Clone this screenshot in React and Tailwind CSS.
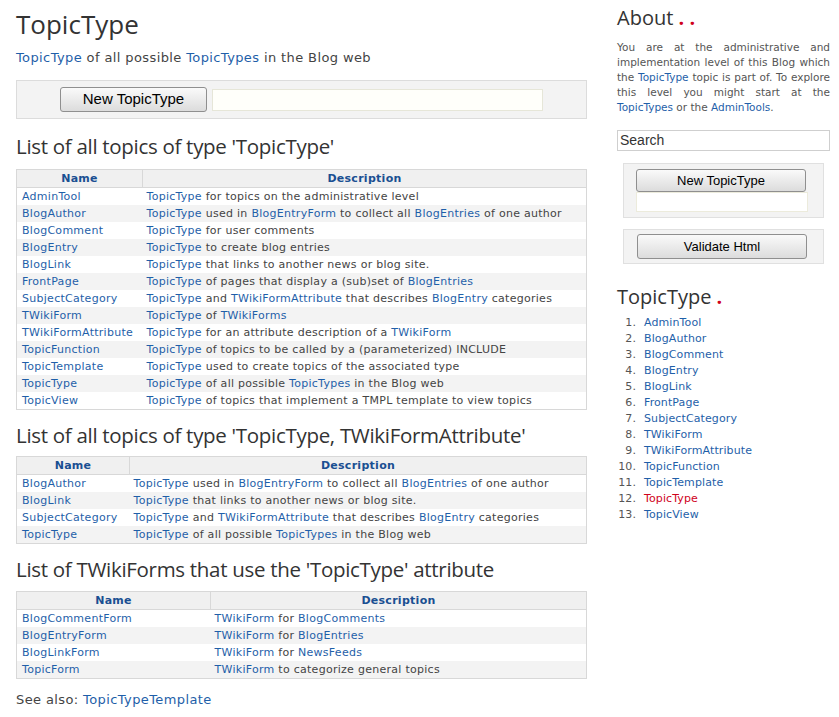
import React from "react";

const L = ({ children }) => <a className="text-[#1f5fa9] no-underline">{children}</a>;

const table1 = [
  ["AdminTool", <><L>TopicType</L> for topics on the administrative level</>],
  ["BlogAuthor", <><L>TopicType</L> used in <L>BlogEntryForm</L> to collect all <L>BlogEntries</L> of one author</>],
  ["BlogComment", <><L>TopicType</L> for user comments</>],
  ["BlogEntry", <><L>TopicType</L> to create blog entries</>],
  ["BlogLink", <><L>TopicType</L> that links to another news or blog site.</>],
  ["FrontPage", <><L>TopicType</L> of pages that display a (sub)set of <L>BlogEntries</L></>],
  ["SubjectCategory", <><L>TopicType</L> and <L>TWikiFormAttribute</L> that describes <L>BlogEntry</L> categories</>],
  ["TWikiForm", <><L>TopicType</L> of <L>TWikiForms</L></>],
  ["TWikiFormAttribute", <><L>TopicType</L> for an attribute description of a <L>TWikiForm</L></>],
  ["TopicFunction", <><L>TopicType</L> of topics to be called by a (parameterized) INCLUDE</>],
  ["TopicTemplate", <><L>TopicType</L> used to create topics of the associated type</>],
  ["TopicType", <><L>TopicType</L> of all possible <L>TopicTypes</L> in the Blog web</>],
  ["TopicView", <><L>TopicType</L> of topics that implement a TMPL template to view topics</>],
];

const table2 = [
  ["BlogAuthor", <><L>TopicType</L> used in <L>BlogEntryForm</L> to collect all <L>BlogEntries</L> of one author</>],
  ["BlogLink", <><L>TopicType</L> that links to another news or blog site.</>],
  ["SubjectCategory", <><L>TopicType</L> and <L>TWikiFormAttribute</L> that describes <L>BlogEntry</L> categories</>],
  ["TopicType", <><L>TopicType</L> of all possible <L>TopicTypes</L> in the Blog web</>],
];

const table3 = [
  ["BlogCommentForm", <><L>TWikiForm</L> for <L>BlogComments</L></>],
  ["BlogEntryForm", <><L>TWikiForm</L> for <L>BlogEntries</L></>],
  ["BlogLinkForm", <><L>TWikiForm</L> for <L>NewsFeeds</L></>],
  ["TopicForm", <><L>TWikiForm</L> to categorize general topics</>],
];

const sideList = [
  "AdminTool", "BlogAuthor", "BlogComment", "BlogEntry", "BlogLink", "FrontPage",
  "SubjectCategory", "TWikiForm", "TWikiFormAttribute", "TopicFunction", "TopicTemplate",
  "TopicType", "TopicView",
];

const TopicTable = ({ rows, nameW }) => (
  <table className="w-full border-collapse border border-[#d8d8d8] text-[11px] leading-[17px] tracking-[0.025em]">
    <thead>
      <tr className="bg-[#f0f0f0]">
        <th className="border-r border-b border-[#d8d8d8] text-[#1a4f92] font-bold h-[17px] p-0" style={{ width: nameW }}>Name</th>
        <th className="border-b border-[#d8d8d8] text-[#1a4f92] font-bold p-0">Description</th>
      </tr>
    </thead>
    <tbody>
      {rows.map(([n, d], i) => (
        <tr key={n} className={i % 2 ? "bg-[#f3f3f3]" : "bg-white"}>
          <td className="px-[5px] py-0 h-[17px] whitespace-nowrap"><L>{n}</L></td>
          <td className="px-[4px] py-0 whitespace-nowrap text-[#444]">{d}</td>
        </tr>
      ))}
    </tbody>
  </table>
);

const Btn = ({ children, className }) => (
  <button className={`rounded-[3px] border border-[#8f8f8f] bg-gradient-to-b from-[#fafafa] to-[#dcdcdc] font-['Liberation_Sans',Arial,sans-serif] text-black ${className}`}>
    {children}
  </button>
);

const H2 = ({ children, className }) => (
  <h2 className={`font-['Open_Sans',sans-serif] text-[20.5px] leading-[26px] text-[#333] tracking-[-0.3px] ${className}`}>{children}</h2>
);

export default function App() {
  return (
    <div className="w-[839px] h-[717px] bg-white font-['DejaVu_Sans',Verdana,sans-serif] text-[#444] flex overflow-hidden">
      <main className="w-[571px] ml-[16px] flex flex-col">
        <h1 className="font-['Open_Sans',sans-serif] text-[26px] leading-[30px] text-[#333] mt-[9px]">TopicType</h1>
        <p className="text-[13px] mt-[10px] leading-[18px] tracking-[0.03em]"><L>TopicType</L> of all possible <L>TopicTypes</L> in the Blog web</p>
        <div className="mt-[13px] h-[39px] bg-[#f3f3f3] border border-[#dcdcdc] flex items-center pl-[43px] gap-[5px]">
          <Btn className="w-[147px] h-[25px] text-[15px]">New TopicType</Btn>
          <input className="w-[331px] h-[22px] bg-[#fffffa] border border-[#e6e6d8] outline-none" />
        </div>
        <H2 className="mt-[14px] mb-[10px]">List of all topics of type 'TopicType'</H2>
        <TopicTable rows={table1} nameW={126} />
        <H2 className="mt-[12px] mb-[8px]">List of all topics of type 'TopicType, TWikiFormAttribute'</H2>
        <TopicTable rows={table2} nameW={113} />
        <H2 className="mt-[12px] mb-[9px]">List of TWikiForms that use the 'TopicType' attribute</H2>
        <TopicTable rows={table3} nameW={194} />
        <p className="text-[13px] mt-[12px] leading-[18px] tracking-[0.03em]">See also: <L>TopicTypeTemplate</L></p>
      </main>
      <aside className="w-[213px] ml-[30px] flex flex-col">
        <h2 className="font-['Open_Sans',sans-serif] text-[20px] leading-[24px] text-[#333] mt-[6px]">About <span className="text-[#d0021b] font-bold">. .</span></h2>
        <p className="text-[10.5px] leading-[15px] text-[#555] text-justify mt-[10px]">
          You are at the administrative and implementation level of this Blog which the <L>TopicType</L> topic is part of. To explore this level you might start at the <L>TopicTypes</L> or the <L>AdminTools</L>.
        </p>
        <input className="mt-[15px] h-[21px] w-[213px] border border-[#cfcfcf] px-[2px] text-[14px] font-['Liberation_Sans',Arial,sans-serif] text-[#333] placeholder:text-[#333] outline-none" placeholder="Search" />
        <div className="mt-[12px] mx-[6px] h-[55px] bg-[#f3f3f3] border border-[#e0e0e0] flex flex-col items-start pl-[12px] pt-[5px]">
          <Btn className="w-[170px] text-[13px] h-[23px]">New TopicType</Btn>
          <input className="w-[172px] h-[20px] bg-white border border-[#ecebdc] outline-none" />
        </div>
        <div className="mt-[11px] mx-[6px] h-[35px] bg-[#f3f3f3] border border-[#e0e0e0] flex items-center pl-[13px]">
          <Btn className="w-[170px] text-[13px] h-[25px]">Validate Html</Btn>
        </div>
        <h2 className="font-['Open_Sans',sans-serif] text-[20px] leading-[24px] text-[#333] mt-[21px]">TopicType <span className="text-[#d0021b] font-bold">.</span></h2>
        <ol className="mt-[6px] text-[11px] leading-[16px] tracking-[0.01em]">
          {sideList.map((t, i) => (
            <li key={t} className="flex">
              <span className="w-[19px] text-right text-[#555]">{i + 1}.</span>
              <span className="ml-[8px]">{t === "TopicType" ? <span className="text-[#d0021b]">{t}</span> : <L>{t}</L>}</span>
            </li>
          ))}
        </ol>
      </aside>
    </div>
  );
}
